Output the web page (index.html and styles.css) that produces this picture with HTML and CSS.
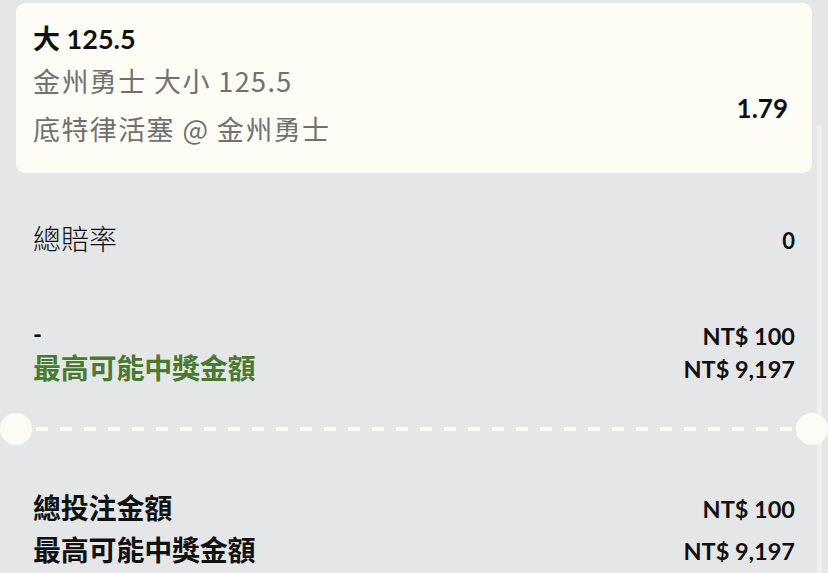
FILE: index.html
```html
<!DOCTYPE html>
<html lang="zh-Hant">
<head>
    <meta charset="UTF-8">
    <meta name="viewport" content="width=device-width, initial-scale=1.0">
    <title>投注單</title>
    <link rel="stylesheet" href="styles.css">
</head>
<body>
    <div class="slip">
        <div class="bet-card">
            <div class="bet-info">
                <div class="bet-title">大 125.5</div>
                <div class="bet-line">金州勇士 大小 125.5</div>
                <div class="bet-line">底特律活塞 @ 金州勇士</div>
            </div>
            <div class="bet-odds">1.79</div>
        </div>

        <div class="row row-odds">
            <span class="label-light">總賠率</span>
            <span class="amount amount-sm">0</span>
        </div>

        <div class="stake-group">
            <div class="row row-tight">
                <span class="label-dash">-</span>
                <span class="amount">NT$ 100</span>
            </div>
            <div class="row row-tight">
                <span class="label label-green">最高可能中獎金額</span>
                <span class="amount">NT$ 9,197</span>
            </div>
        </div>

        <div class="divider">
            <span class="notch"></span>
            <span class="dashes"></span>
            <span class="notch"></span>
        </div>

        <div class="totals">
            <div class="row row-total">
                <span class="label">總投注金額</span>
                <span class="amount">NT$ 100</span>
            </div>
            <div class="row row-total">
                <span class="label">最高可能中獎金額</span>
                <span class="amount">NT$ 9,197</span>
            </div>
        </div>

        <div class="scroll-track"></div>
    </div>
</body>
</html>
```

FILE: styles.css
```css
body {
    margin: 0;
    background-color: #e5e6e8;
    font-family: Lato, "Noto Sans CJK TC", sans-serif;
    color: #111;
    overflow: hidden;
}
.slip {
    position: relative;
    height: 573px;
}
.bet-card {
    display: flex;
    justify-content: space-between;
    margin: 3px 16px 0 16px;
    padding: 18px 24px 20px 17px;
    background: #fdfdf6;
    border-radius: 9px;
}
.bet-title {
    font-size: 27px;
    font-weight: 700;
    line-height: 36px;
}
.bet-line {
    font-family: "Noto Sans CJK TC", sans-serif;
    font-size: 27px;
    line-height: 48px;
    color: #707070;
    letter-spacing: 1.4px;
}
.bet-odds {
    padding-top: 72px;
    font-size: 26px;
    font-weight: 700;
    line-height: 30px;
}
.row {
    display: flex;
    justify-content: space-between;
    align-items: center;
    padding: 0 33px;
}
.row-odds {
    margin-top: 47px;
    height: 36px;
}
.stake-group {
    margin-top: 61px;
}
.row-tight {
    height: 33px;
}
.row-total {
    height: 42px;
}
.label,
.label-light {
    font-family: "Noto Sans CJK TC", sans-serif;
    font-size: 28px;
}
.label {
    font-weight: 700;
    letter-spacing: -0.2px;
}
.label-light {
    font-weight: 300;
}
.label-green {
    color: #4a7a30;
}
.label-dash {
    font-size: 24px;
    font-weight: 700;
}
.amount {
    font-size: 23.5px;
    font-weight: 700;
    position: relative;
    top: 2px;
}
.amount-sm {
    font-size: 22px;
}
.divider {
    display: flex;
    align-items: center;
    margin-top: 30px;
}
.notch {
    width: 32px;
    height: 32px;
    border-radius: 50%;
    background: #fdfdf5;
    position: relative;
    z-index: 1;
}
.dashes {
    flex: 1;
    height: 4px;
    margin: 0 4px;
    background: repeating-linear-gradient(to right, #fbfbf5 0 12px, transparent 12px 24px);
}
.totals {
    margin-top: 41px;
}
.scroll-track {
    position: absolute;
    top: 122px;
    bottom: 0;
    right: 6px;
    width: 5px;
    border-radius: 3px 3px 0 0;
    background: #eff0f1;
}
```
